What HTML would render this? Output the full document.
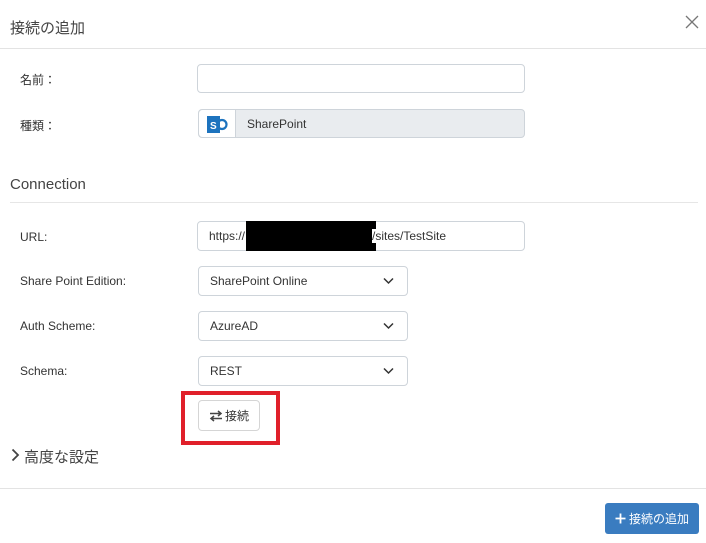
<!DOCTYPE html>
<html><head><meta charset="utf-8"><style>
*{box-sizing:border-box;margin:0;padding:0}
body{width:706px;height:543px;background:#fff;font-family:"Liberation Sans","Noto Sans CJK JP",sans-serif;color:#333;position:relative;overflow:hidden;font-size:12px}
.a{position:absolute}
.lbl{position:absolute;left:20px;font-size:12px;color:#333}
.inp{position:absolute;border:1px solid #ced4da;border-radius:4px;background:#fff;font-size:12px;padding-left:11px;display:flex;align-items:center;color:#333}
.chev{position:absolute;right:13px;top:10px}
</style></head><body>
<div class="a" style="left:10px;top:17px;font-size:15px;color:#444">接続の追加</div>
<svg class="a" style="left:685px;top:15px" width="14" height="14" viewBox="0 0 14 14"><path d="M1 1L13 13M13 1L1 13" stroke="#777" stroke-width="1.3"/></svg>
<div class="a" style="left:0;top:48px;width:706px;height:1px;background:#e3e3e3"></div>

<div class="lbl" style="top:71px">名前：</div>
<div class="inp" style="left:197px;top:64px;width:328px;height:29px"></div>
<div class="lbl" style="top:117px">種類：</div>
<div class="inp" style="left:198px;top:109px;width:327px;height:29px;background:#e9ecef;padding-left:0">
<div style="width:37px;height:100%;background:#fff;border-right:1px solid #ced4da;border-radius:4px 0 0 4px;position:relative">
<svg class="a" style="left:8px;top:6px" width="22" height="17" viewBox="0 0 22 17"><circle cx="15" cy="8.5" r="4.5" fill="none" stroke="#1d73be" stroke-width="2.2"/><rect x="0" y="0" width="13" height="17" fill="#1d73be"/><text x="3" y="13" font-size="10" font-weight="bold" fill="#fff" font-family="Liberation Sans">S</text></svg>
</div>
<span style="margin-left:11px">SharePoint</span></div>

<div class="a" style="left:10px;top:176px;font-size:15px;color:#444">Connection</div>
<div class="a" style="left:10px;top:202px;width:688px;height:1px;background:#e6e6e6"></div>

<div class="lbl" style="top:230px">URL:</div>
<div class="inp" style="left:197px;top:221px;width:328px;height:30px">https://<span style="display:inline-block;width:130px;height:30px;background:#000;margin:0 0 0 1px"></span><span style="margin-left:-4px;background:#fff">/sites/TestSite</span></div>

<div class="lbl" style="top:274px">Share Point Edition:</div>
<div class="inp" style="left:198px;top:266px;width:210px;height:30px">SharePoint Online<svg class="chev" width="11" height="8" viewBox="0 0 11 8"><path d="M1 1.5L5.5 6L10 1.5" fill="none" stroke="#333" stroke-width="1.5"/></svg></div>
<div class="lbl" style="top:319px">Auth Scheme:</div>
<div class="inp" style="left:198px;top:311px;width:210px;height:30px">AzureAD<svg class="chev" width="11" height="8" viewBox="0 0 11 8"><path d="M1 1.5L5.5 6L10 1.5" fill="none" stroke="#333" stroke-width="1.5"/></svg></div>
<div class="lbl" style="top:364px">Schema:</div>
<div class="inp" style="left:198px;top:356px;width:210px;height:30px">REST<svg class="chev" width="11" height="8" viewBox="0 0 11 8"><path d="M1 1.5L5.5 6L10 1.5" fill="none" stroke="#333" stroke-width="1.5"/></svg></div>

<div class="a" style="left:181px;top:391px;width:99px;height:54px;border:4px solid #e0202a"></div>
<div class="inp" style="left:198px;top:400px;width:62px;height:31px;padding-left:10px;border-color:#d5d5d5">
<svg width="14" height="12" viewBox="0 0 14 12" style="margin-right:2px"><path d="M1 3.5H12M9 1L12 3.5L9 6M13 8.5H2M5 6L2 8.5L5 11" fill="none" stroke="#444" stroke-width="1.5"/></svg>接続</div>

<svg class="a" style="left:11px;top:448px" width="9" height="14" viewBox="0 0 9 14"><path d="M1.5 1.5L7 7L1.5 12.5" fill="none" stroke="#444" stroke-width="1.8"/></svg>
<div class="a" style="left:24px;top:446px;font-size:15px;color:#444">高度な設定</div>
<div class="a" style="left:0;top:488px;width:706px;height:1px;background:#e3e3e3"></div>

<div class="a" style="left:605px;top:503px;width:94px;height:31px;background:#3a7cc0;border-radius:3px;color:#fff;font-size:12px;display:flex;align-items:center;justify-content:center">
<svg width="11" height="11" viewBox="0 0 11 11" style="margin-right:3px"><path d="M5.5 0.5V10.5M0.5 5.5H10.5" stroke="#fff" stroke-width="1.8"/></svg>接続の追加</div>
</body></html>
